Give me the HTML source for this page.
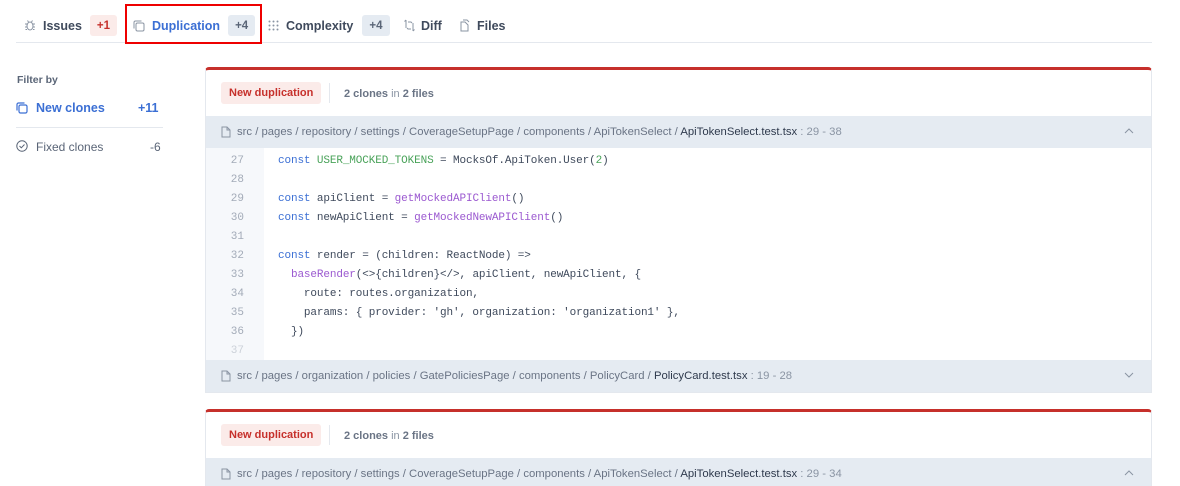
<!DOCTYPE html>
<html><head><style>
*{box-sizing:border-box;margin:0;padding:0}
html,body{width:1180px;height:486px;overflow:hidden}
body{background:#fff;font-family:"Liberation Sans",sans-serif;color:#3f4a5c;position:relative;font-size:12px}
.abs{position:absolute}
.tab{position:absolute;top:15px;font-weight:bold;font-size:12.5px;color:#3f4a5c;display:flex;align-items:center;height:21px}
.badge{display:inline-flex;align-items:center;padding:0 7px;height:21px;border-radius:3px;font-size:11.5px;font-weight:bold}
.card{position:absolute;left:205px;width:947px;border:1px solid #e4e8ee;border-top:3px solid #c6302b;border-radius:4px 4px 0 0;background:#fff}
.hdr{height:46px;position:relative}
.nd{position:absolute;left:15px;top:12px;background:#fbebe9;color:#c6302b;font-weight:bold;font-size:11px;padding:0 8px;height:22px;display:flex;align-items:center;border-radius:3px}
.cl{position:absolute;left:138px;top:18px;font-size:11px;color:#8a94a3}
.cl b{color:#6a7485}
.sep{position:absolute;left:123px;top:13px;width:1px;height:20px;background:#e4e8ee}
.path{height:32px;background:#e5ebf2;position:relative;font-size:11.3px;color:#6a7485;line-height:32px;padding-left:31px}
.path .f{color:#2f3a4d}
.path .n{color:#8a94a3}
.path svg.doc{position:absolute;left:15px;top:10px}
.chev{position:absolute;right:17px;top:12px}
.code{position:relative;height:212px;overflow:hidden}
.gut{position:absolute;left:0;top:0;width:58px;height:100%;background:#f6f8fb}
.ln{position:absolute;left:0;width:38px;text-align:right;font-family:"Liberation Mono",monospace;font-size:11px;color:#a3abb8}
.cd{position:absolute;left:72px;font-family:"Liberation Mono",monospace;font-size:11px;color:#3f4a5c;white-space:pre;letter-spacing:-0.12px}
.k{color:#3b6fd4}.g{color:#4aa35a}.p{color:#9b59d0}
</style></head><body>
<div class="abs" style="left:16px;top:42px;width:1136px;height:1px;background:#e4e8ee"></div>
<div class="tab" style="left:24px"><svg width="12" height="13" viewBox="0 0 12 13" fill="none" stroke="#8a94a3" stroke-width="1"><ellipse cx="6" cy="7" rx="3" ry="4"/><path d="M3 5H1M3 8H1M3 10.5H1.5M9 5h2M9 8h2M9 10.5h1.5M4.5 3l-1-1.5M7.5 3l1-1.5"/></svg><span style="margin-left:7px">Issues</span><span class="badge" style="margin-left:8px;background:#fbebe9;color:#c6302b">+1</span></div>
<div class="abs" style="left:125px;top:4px;width:137px;height:40px;border:2px solid #e00"></div>
<div class="tab" style="left:133px;color:#3b6fd4"><svg width="12" height="12" viewBox="0 0 12 12" fill="none" stroke="#8a94a3" stroke-width="1"><rect x="3" y="3" width="8" height="8" rx="1.5"/><path d="M1 8.5V2.5A1.5 1.5 0 0 1 2.5 1h6"/></svg><span style="margin-left:7px">Duplication</span><span class="badge" style="margin-left:8px;background:#e5ebf2;color:#5a6577">+4</span></div>
<div class="tab" style="left:268px"><svg width="11" height="11" viewBox="0 0 11 11" fill="#8a94a3"><circle cx="1.5" cy="1.5" r="1"/><circle cx="5.5" cy="1.5" r="1"/><circle cx="9.5" cy="1.5" r="1"/><circle cx="1.5" cy="5.5" r="1"/><circle cx="5.5" cy="5.5" r="1"/><circle cx="9.5" cy="5.5" r="1"/><circle cx="1.5" cy="9.5" r="1"/><circle cx="5.5" cy="9.5" r="1"/><circle cx="9.5" cy="9.5" r="1"/></svg><span style="margin-left:7px">Complexity</span><span class="badge" style="margin-left:9px;background:#e5ebf2;color:#5a6577">+4</span></div>
<div class="tab" style="left:404px"><svg width="11" height="13" viewBox="0 0 11 13" fill="none" stroke="#8a94a3" stroke-width="1"><path d="M2 1v8M9 4v8M2 1l-1.5 1.5M9 12l1.5-1.5M4 3h3l1 1M7 10H4l-1-1"/></svg><span style="margin-left:6px">Diff</span></div>
<div class="tab" style="left:458px"><svg width="12" height="13" viewBox="0 0 12 13" fill="none" stroke="#8a94a3" stroke-width="1"><path d="M3 3h4l3 3v6H3z M5 1h4l2 2"/></svg><span style="margin-left:7px">Files</span></div>

<div class="abs" style="left:17px;top:74px;font-size:10.5px;font-weight:bold;color:#5a6577">Filter by</div>
<svg class="abs" style="left:16px;top:102px" width="12" height="12" viewBox="0 0 12 12" fill="none" stroke="#3b6fd4" stroke-width="1.2"><rect x="3" y="3" width="8" height="8" rx="1.5"/><path d="M1 8.5V2.5A1.5 1.5 0 0 1 2.5 1h6"/></svg>
<div class="abs" style="left:36px;top:101px;font-size:12.5px;font-weight:bold;color:#3b6fd4">New clones</div>
<div class="abs" style="left:138px;top:101px;font-size:12.5px;font-weight:bold;color:#3b6fd4">+11</div>
<div class="abs" style="left:16px;top:127px;width:147px;height:1px;background:#e4e8ee"></div>
<svg class="abs" style="left:16px;top:140px" width="12" height="12" viewBox="0 0 12 12" fill="none" stroke="#5a6577" stroke-width="1"><circle cx="6" cy="6" r="5.2"/><path d="M3.5 6l1.8 1.8L8.5 4.5"/></svg>
<div class="abs" style="left:36px;top:140px;font-size:12px;color:#5a6577">Fixed clones</div>
<div class="abs" style="left:150px;top:140px;font-size:12px;color:#5a6577">-6</div>

<div class="card" style="top:67px;height:326px">
 <div class="hdr"><span class="nd">New duplication</span><span class="sep"></span><span class="cl"><b>2 clones</b> in <b>2 files</b></span></div>
 <div class="path"><svg class="doc" width="10" height="12" viewBox="0 0 10 12" fill="none" stroke="#8a94a3"><path d="M1 1h5l3 3v7H1z M6 1v3h3"/></svg>src / pages / repository / settings / CoverageSetupPage / components / ApiTokenSelect / <span class="f">ApiTokenSelect.test.tsx</span><span class="n"> : 29 - 38</span><svg class="chev" width="10" height="6" viewBox="0 0 10 6" fill="none" stroke="#8a94a3"><path d="M1 5l4-4 4 4"/></svg></div>
 <div class="code">
  <div class="gut"></div>
  <div class="ln" style="top:7px">27</div><div class="ln" style="top:26px">28</div><div class="ln" style="top:45px">29</div><div class="ln" style="top:64px">30</div><div class="ln" style="top:83px">31</div><div class="ln" style="top:102px">32</div><div class="ln" style="top:121px">33</div><div class="ln" style="top:140px">34</div><div class="ln" style="top:159px">35</div><div class="ln" style="top:178px">36</div><div class="ln" style="top:197px;opacity:.5">37</div>
  <div class="cd" style="top:7px"><span class="k">const</span> <span class="g">USER_MOCKED_TOKENS</span> = MocksOf.ApiToken.User(<span class="g">2</span>)</div>
  <div class="cd" style="top:45px"><span class="k">const</span> apiClient = <span class="p">getMockedAPIClient</span>()</div>
  <div class="cd" style="top:64px"><span class="k">const</span> newApiClient = <span class="p">getMockedNewAPIClient</span>()</div>
  <div class="cd" style="top:102px"><span class="k">const</span> render = (children: ReactNode) =&gt;</div>
  <div class="cd" style="top:121px">  <span class="p">baseRender</span>(&lt;&gt;{children}&lt;/&gt;, apiClient, newApiClient, {</div>
  <div class="cd" style="top:140px">    route: routes.organization,</div>
  <div class="cd" style="top:159px">    params: { provider: 'gh', organization: 'organization1' },</div>
  <div class="cd" style="top:178px">  })</div>
 </div>
 <div class="path"><svg class="doc" width="10" height="12" viewBox="0 0 10 12" fill="none" stroke="#8a94a3"><path d="M1 1h5l3 3v7H1z M6 1v3h3"/></svg>src / pages / organization / policies / GatePoliciesPage / components / PolicyCard / <span class="f">PolicyCard.test.tsx</span><span class="n"> : 19 - 28</span><svg class="chev" width="10" height="6" viewBox="0 0 10 6" fill="none" stroke="#8a94a3"><path d="M1 1l4 4 4-4"/></svg></div>
</div>

<div class="card" style="top:409px;height:90px">
 <div class="hdr"><span class="nd">New duplication</span><span class="sep"></span><span class="cl"><b>2 clones</b> in <b>2 files</b></span></div>
 <div class="path"><svg class="doc" width="10" height="12" viewBox="0 0 10 12" fill="none" stroke="#8a94a3"><path d="M1 1h5l3 3v7H1z M6 1v3h3"/></svg>src / pages / repository / settings / CoverageSetupPage / components / ApiTokenSelect / <span class="f">ApiTokenSelect.test.tsx</span><span class="n"> : 29 - 34</span><svg class="chev" width="10" height="6" viewBox="0 0 10 6" fill="none" stroke="#8a94a3"><path d="M1 5l4-4 4 4"/></svg></div>
</div>
</body></html>
